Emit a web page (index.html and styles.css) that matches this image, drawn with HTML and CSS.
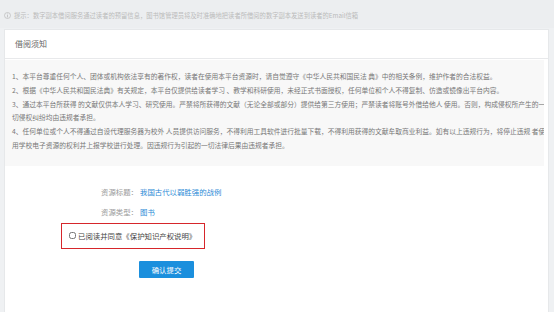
FILE: index.html
```html
<!DOCTYPE html>
<html lang="zh-CN">
<head>
<meta charset="utf-8">
<title>借阅须知</title>
<link rel="stylesheet" href="styles.css">
</head>
<body>
<div class="hint">
  <svg class="hint-icon" viewBox="0 0 10 10" width="7" height="7"><circle cx="5" cy="5" r="4.3" fill="none" stroke="#b5b5b5" stroke-width="0.9"/><rect x="4.5" y="2.2" width="1" height="1" fill="#b5b5b5"/><rect x="4.5" y="4" width="1" height="3.8" fill="#b5b5b5"/></svg>
  <span>提示：数字副本借阅服务通过读者的预留信息，图书馆管理员将及时准确地把读者所借阅的数字副本发送到读者的Email信箱</span>
</div>
<div class="panel">
  <div class="panel-head">借阅须知</div>
  <div class="notice">
    <p>1、本平台尊重任何个人、团体或机构依法享有的著作权，读者在使用本平台资源时，请自觉遵守《中华人民共和国民法 典》中的相关条例，维护作者的合法权益。</p>
    <p>2、根据《中华人民共和国民法典》有关规定，本平台仅提供给读者学习 、教学和科研使用，未经正式书面授权，任何单位和个人不得复制、仿造或镜像出平台内容。</p>
    <p>3、通过本平台所获得 的文献仅供本人学习、研究使用。严禁将所获得的文献（无论全部或部分）提供给第三方使用；严禁读者将账号外借给他人 使用。否则，构成侵权所产生的一<br>切侵权纠纷均由违规者承担。</p>
    <p>4、任何单位或个人不得通过自设代理服务器为校外 人员提供访问服务，不得利用工具软件进行批量下载，不得利用获得的文献牟取商业利益。如有以上违规行为，将停止违规 者使<br>用学校电子资源的权利并上报学校进行处理。因违规行为引起的一切法律后果由违规者承担。</p>
  </div>
  <div class="info">
    <div class="info-row"><span class="info-label">资源标题：</span><a class="info-value" href="#">我国古代以弱胜强的战例</a></div>
    <div class="info-row"><span class="info-label">资源类型：</span><span class="info-value">图书</span></div>
  </div>
  <div class="agree-box">
    <label class="agree"><input type="checkbox" class="agree-check"><span>已阅读并同意《保护知识产权说明》</span></label>
  </div>
  <div class="actions">
    <button class="submit" type="button">确认提交</button>
  </div>
</div>
</body>
</html>
```
FILE: styles.css
```css
* { box-sizing: border-box; }
html, body { margin: 0; padding: 0; }
body {
  background: #eff1f3;
  font-family: "Noto Sans CJK SC", "Noto Sans", sans-serif;
  width: 554px;
  height: 312px;
  overflow: hidden;
}
.hint {
  height: 28px;
  display: flex;
  align-items: center;
  padding: 2px 0 0 4px;
  gap: 3px;
  background: #eceef0;
  color: #bbbbbb;
  font-size: 6.3px;
  white-space: nowrap;
}
.hint-icon { flex: none; }
.panel {
  margin: 1px 5px 0 4px;
  background: #fff;
  border: 1px solid #e6e8ea;
  padding-bottom: 36px;
}
.panel-head {
  height: 29px;
  line-height: 28px;
  padding-left: 10px;
  font-size: 8px;
  color: #666;
  border-bottom: 1px solid #e8e9eb;
}
.notice {
  margin: 1px 4px 0 0;
  background: #f8f8f8;
  padding: 10px 4px 13px 7px;
  font-size: 6.75px;
  line-height: 13.8px;
  color: #777;
  white-space: nowrap;
  overflow: hidden;
}
.notice p { margin: 0; }
.info { margin-top: 16px; }
.info-row {
  display: flex;
  height: 20px;
  line-height: 20px;
  font-size: 7.4px;
}
.info-label {
  width: 133px;
  text-align: right;
  color: #9a9a9a;
}
.info-value {
  margin-left: 2px;
  color: #2b8ad6;
  text-decoration: none;
}
.agree-box {
  margin: 1px 0 0 56px;
  width: 144px;
  height: 26px;
  border: 1.5px solid #d6262b;
  display: flex;
  align-items: center;
  padding-left: 7px;
}
.agree {
  display: flex;
  align-items: center;
  gap: 2px;
  font-size: 7.4px;
  color: #444;
  white-space: nowrap;
}
.agree-check {
  margin: 0;
  width: 7px;
  height: 7px;
}
.actions {
  margin: 5px 0 0 134px;
}
.submit {
  width: 55px;
  height: 17px;
  border: 0;
  border-radius: 1px;
  background: #1b8fdd;
  color: #fff;
  font-family: inherit;
  font-size: 7.4px;
  padding: 0;
}
```
